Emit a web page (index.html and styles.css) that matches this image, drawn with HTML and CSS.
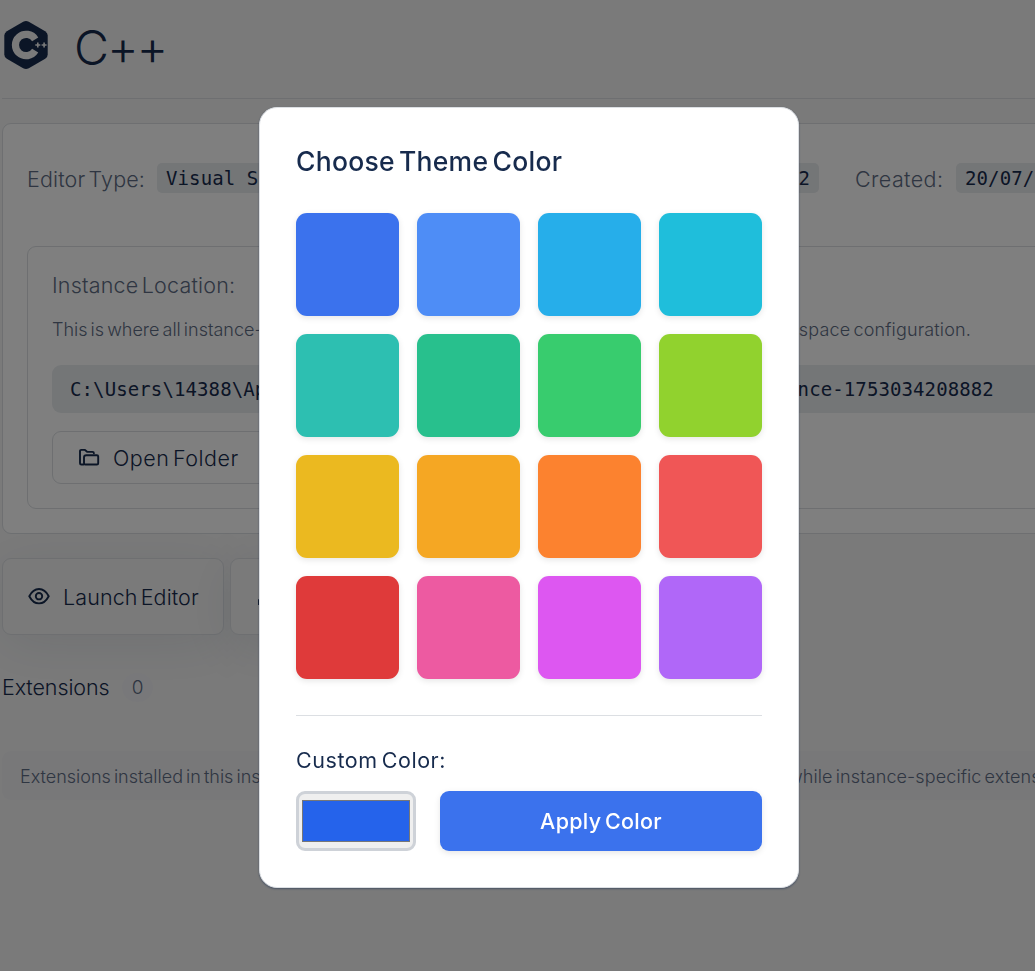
FILE: index.html
```html
<!DOCTYPE html>
<html lang="en">
<head>
<meta charset="utf-8">
<title>C++</title>
<link rel="stylesheet" href="styles.css">
</head>
<body>
<main class="page">
  <header class="header">
    <svg class="logo" width="46" height="50" viewBox="0 0 46 50">
      <path fill="#172b4d" d="M20.2 1.7Q23 .2 25.800 1.700L42.200 11.200Q44.700 12.800 44.700 15.600V34.400Q44.700 37.200 42.200 38.800L25.800 48.300Q23 49.800 20.200 48.300L3.800 38.800Q1.300 37.200 1.300 34.400V15.600Q1.300 12.800 3.800 11.200Z"/>
      <path fill="none" stroke="#f5f5f5" stroke-width="7.200" d="M32.200 19.300A10.700 10.700 0 1 0 32.200 30.700"/>
      <path stroke="#f5f5f5" stroke-width="1.600" d="M32.300 25h5M34.800 22.500v5M38.600 25h5M41.100 22.500v5"/>
    </svg>
    <h1 class="name">C++</h1>
  </header>

  <section class="card">
    <div class="facts">
      <div class="fact fact-editor"><span class="label label-type">Editor Type:</span><code class="chip">Visual Studio Code</code></div>
      <div class="fact fact-version"><span class="label label-version">Version:</span><code class="chip">1.102.2</code></div>
      <div class="fact"><span class="label label-created">Created:</span><code class="chip">20/07/2025</code></div>
    </div>
    <div class="location">
      <div class="label label-location">Instance Location:</div>
      <p class="lead"><span>This is where all instance-specific data is kept</span><span class="lead-end">workspace configuration.</span></p>
      <code class="path">C:\Users\14388\AppData\Roaming\ide-instance-hub\instances\instance-1753034208882</code>
      <button class="button open">
        <svg width="22" height="20" viewBox="0 0 22 20" fill="none" stroke="#172b4d" stroke-width="1.900" stroke-linejoin="round" stroke-linecap="round"><path d="M5.500 16.500H3.300Q2 16.500 2 15.200V3.200Q2 1.900 3.300 1.900H7L9.400 3.900H14.500Q15.900 3.900 15.900 5.300"/><path d="M8.300 7.300H18.900Q20.200 7.300 20.200 8.600V15.200Q20.200 16.500 18.900 16.500H7.300Q6 16.500 6 15.200V9.600Q6 7.300 8.300 7.300Z"/></svg>
        <span>Open Folder</span>
      </button>
    </div>
  </section>

  <div class="actions">
    <button class="button launch">
      <svg width="22" height="18" viewBox="0 0 22 18" fill="none" stroke="#172b4d" stroke-width="1.900"><path d="M1.300 8.200Q5 1 11 1T20.700 8.200Q17 15.400 11 15.400T1.300 8.200Z"/><circle cx="11" cy="8.200" r="3.200"/></svg>
      <span>Launch Editor</span>
    </button>
    <button class="button launch">
      <svg width="22" height="18" viewBox="0 0 22 18" fill="none" stroke="#172b4d" stroke-width="1.900" stroke-linecap="round"><path d="M3 12v4h16v-4M11 2v9M7 7l4 4 4-4"/></svg>
      <span>Export</span>
    </button>
  </div>

  <div class="extensions"><h2 class="subtitle">Extensions</h2><span class="count">0</span></div>
  <p class="note"><span class="note-start">Extensions installed in this instance are isolated</span><span class="note-end">while instance-specific extensions stay here.</span></p>
</main>

<div class="overlay">
  <div class="modal" role="dialog">
    <h3 class="title">Choose Theme Color</h3>
    <div class="swatches">
      <i class="swatch royal"></i><i class="swatch blue"></i><i class="swatch sky"></i><i class="swatch cyan"></i>
      <i class="swatch teal"></i><i class="swatch emerald"></i><i class="swatch green"></i><i class="swatch lime"></i>
      <i class="swatch yellow"></i><i class="swatch amber"></i><i class="swatch orange"></i><i class="swatch coral"></i>
      <i class="swatch red"></i><i class="swatch pink"></i><i class="swatch fuchsia"></i><i class="swatch purple"></i>
    </div>
    <div class="custom">
      <div class="custom-label">Custom Color:</div>
      <div class="custom-row">
        <div class="picker"><div class="picker-color"></div></div>
        <button class="apply"><span>Apply Color</span></button>
      </div>
    </div>
  </div>
</div>
</body>
</html>
```
FILE: styles.css
```css
* { box-sizing: border-box; }
html { overflow: hidden; }
body {
  margin: 0;
  height: 971px;
  overflow: hidden;
  background: #f5f5f5;
  color: #172b4d;
  font-family: Inter, "Liberation Sans", sans-serif;
  font-weight: 300;
}
h1, h2, h3, p { margin: 0; font-weight: inherit; }
button { font: inherit; color: inherit; }
svg { flex: none; display: block; }

.page { width: 100%; padding-left: 2px; overflow: hidden; }
.header {
  display: flex;
  align-items: center;
  gap: 25px;
  height: 99px;
  padding: 0 0 9px 1px;
  border-bottom: 1px solid #dcdfe3;
}
.name { padding-top: 6px; font-size: 48px; line-height: 60px; font-weight: 300; letter-spacing: -1.8px; }

.card {
  width: 1398px;
  height: 411px;
  margin-top: 24px;
  padding: 39px 24px 24px;
  background: #fff;
  border: 1px solid #dcdfe3;
  border-radius: 9px;
}
.facts { display: flex; height: 83px; align-items: flex-start; }
.fact { display: flex; flex: none; align-items: center; height: 30px; white-space: nowrap; }
.fact-editor { width: 392px; }
.fact-version { width: 436px; padding-right: 36px; justify-content: flex-end; }
.label { padding-top: 2px; color: #5e6c84; font-size: 21.5px; line-height: 30px; }
.label-type { width: 130px; letter-spacing: .15px; word-spacing: -3px; }
.label-version { width: 95px; }
.label-created { width: 101px; letter-spacing: .4px; }
.chip {
  height: 30px;
  padding: 0 9px;
  background: #e9ecef;
  border-radius: 5px;
  font: 400 19px/31px "DejaVu Sans Mono", monospace;
  letter-spacing: .11px;
}
.location {
  height: 263px;
  padding: 22px 24px;
  border: 1px solid #dcdfe3;
  border-radius: 9px;
}
.label-location { height: 31px; padding-top: 1px; letter-spacing: .2px; word-spacing: -3px; }
.lead {
  display: flex;
  justify-content: space-between;
  width: 919px;
  margin-top: 17px;
  color: #5e6c84;
  font-size: 18px;
  line-height: 26px;
  word-spacing: -2px;
  white-space: nowrap;
}
.lead-end { letter-spacing: .15px; }
.path {
  display: block;
  height: 48px;
  margin-top: 22px;
  padding: 0 18px;
  background: #e9ecef;
  border-radius: 9px;
  font: 400 19px/49px "DejaVu Sans Mono", monospace;
  letter-spacing: .11px;
}
.button {
  display: flex;
  flex: none;
  align-items: center;
  background: transparent;
  border: 1px solid #dcdfe3;
  border-radius: 9px;
  font-size: 21.5px;
  white-space: nowrap;
}
.open { width: 240px; height: 53px; margin-top: 18px; padding: 0 25px; gap: 13px; letter-spacing: .5px; word-spacing: -3px; }
.actions { display: flex; gap: 6px; margin-top: 24px; }
.launch {
  width: 222px;
  height: 77px;
  padding: 0 25px;
  gap: 13px;
  background: #f5f5f5;
  box-shadow: 0 9px 54px rgba(23, 43, 77, .09);
  letter-spacing: .1px;
  word-spacing: -3px;
}
.launch span { padding-top: 1px; }
.extensions { display: flex; align-items: center; height: 30px; margin-top: 37px; }
.subtitle { width: 120px; font-size: 21.5px; line-height: 30px; letter-spacing: -.1px; }
.count {
  width: 31px;
  height: 29px;
  background: #f1f1f4;
  border-radius: 15px;
  color: #5e6c84;
  font-size: 19px;
  line-height: 30px;
  text-align: center;
}
.note {
  display: flex;
  width: 1398px;
  height: 49px;
  margin-top: 49px;
  padding: 0 18px;
  background: #f0f0f3;
  border-radius: 9px;
  color: #5e6c84;
  font-size: 18px;
  line-height: 51px;
  word-spacing: -2px;
  white-space: nowrap;
}
.note-start { width: 768px; }
.note-end { letter-spacing: .1px; }

.overlay {
  position: fixed;
  inset: 0;
  padding: 107px 0 0 259px;
  background: rgba(0, 0, 0, .5);
}
.modal {
  width: 540px;
  height: 781px;
  padding: 36px;
  background: #fff;
  border: 1px solid #dcdfe3;
  border-radius: 18px;
  box-shadow: 0 1px 2px rgba(23, 43, 77, .5);
}
.title {
  height: 69px;
  font-size: 26.5px;
  line-height: 35px;
  font-weight: 500;
  letter-spacing: .25px;
  word-spacing: -3px;
  white-space: nowrap;
}
.swatches { display: grid; grid-template-columns: repeat(4, 103px); grid-auto-rows: 103px; gap: 18px; }
.swatch { border-radius: 11px; box-shadow: 0 2px 6px rgba(0, 0, 0, .1); }
.royal { background: #3b72ed; }
.blue { background: #4e8df6; }
.sky { background: #26aeea; }
.cyan { background: #1fbedb; }
.teal { background: #2dbfb1; }
.emerald { background: #28c08d; }
.green { background: #38cc6e; }
.lime { background: #91d22e; }
.yellow { background: #ebb920; }
.amber { background: #f5a723; }
.orange { background: #fc822f; }
.coral { background: #f05656; }
.red { background: #df3a3a; }
.pink { background: #ed5aa1; }
.fuchsia { background: #dd57f1; }
.purple { background: #b067f8; }

.custom { margin-top: 36px; padding-top: 28px; border-top: 1px solid #dcdfe3; }
.custom-label { height: 47px; font-size: 21.5px; line-height: 32px; font-weight: 400; letter-spacing: .55px; word-spacing: -2.5px; }
.custom-row { display: flex; gap: 24px; }
.picker {
  width: 120px;
  height: 60px;
  padding: 6px 3px;
  background: #efefef;
  border: 3px solid #ced2d8;
  border-radius: 9px;
}
.picker-color { height: 42px; background: #2563eb; border: 1px solid #777; }
.apply {
  flex: 1;
  height: 60px;
  border: 0;
  border-radius: 9px;
  background: #3b72ed;
  color: #fff;
  font-size: 21.5px;
  font-weight: 550;
  letter-spacing: .3px;
  word-spacing: -2.5px;
  box-shadow: 0 2px 6px rgba(0, 0, 0, .1);
}
```
